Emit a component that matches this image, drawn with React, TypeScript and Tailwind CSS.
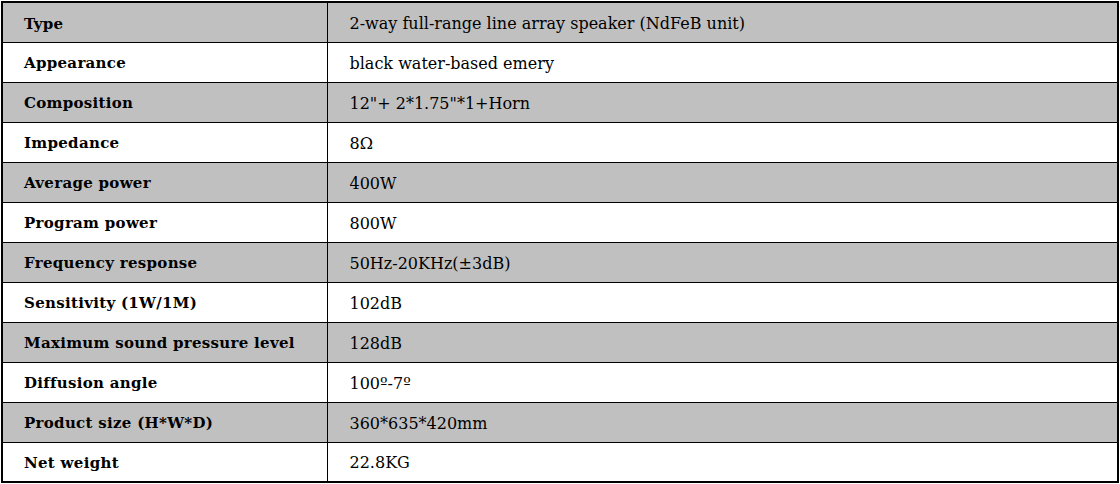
import React from 'react';

const specs: [string, string][] = [
  ['Type', '2-way full-range line array speaker (NdFeB unit)'],
  ['Appearance', 'black water-based emery'],
  ['Composition', '12"+ 2*1.75"*1+Horn'],
  ['Impedance', '8Ω'],
  ['Average power', '400W'],
  ['Program power', '800W'],
  ['Frequency response', '50Hz-20KHz(±3dB)'],
  ['Sensitivity (1W/1M)', '102dB'],
  ['Maximum sound pressure level', '128dB'],
  ['Diffusion angle', '100º-7º'],
  ['Product size (H*W*D)', '360*635*420mm'],
  ['Net weight', '22.8KG'],
];

const App = () => {
  return (
    <div className="w-[1120px] h-[484px] bg-white pl-px pt-px font-['DejaVu_Serif',serif] text-[16px] text-black">
      <table className="w-[1118px] border-collapse border-2 border-black table-fixed">
        <colgroup>
          <col className="w-[325px]" />
          <col />
        </colgroup>
        <tbody>
          {specs.map(([label, value], i) => (
            <tr key={label} className={i % 2 === 0 ? 'bg-[#c0c0c0] h-10' : 'bg-white h-10'}>
              <td className="border border-black pl-[21px] pt-[3px] text-[15px] tracking-[0.3px] font-bold align-middle">{label}</td>
              <td className="border border-black pl-[22px] pt-[3px] align-middle">{value}</td>
            </tr>
          ))}
        </tbody>
      </table>
    </div>
  );
};

export default App;
